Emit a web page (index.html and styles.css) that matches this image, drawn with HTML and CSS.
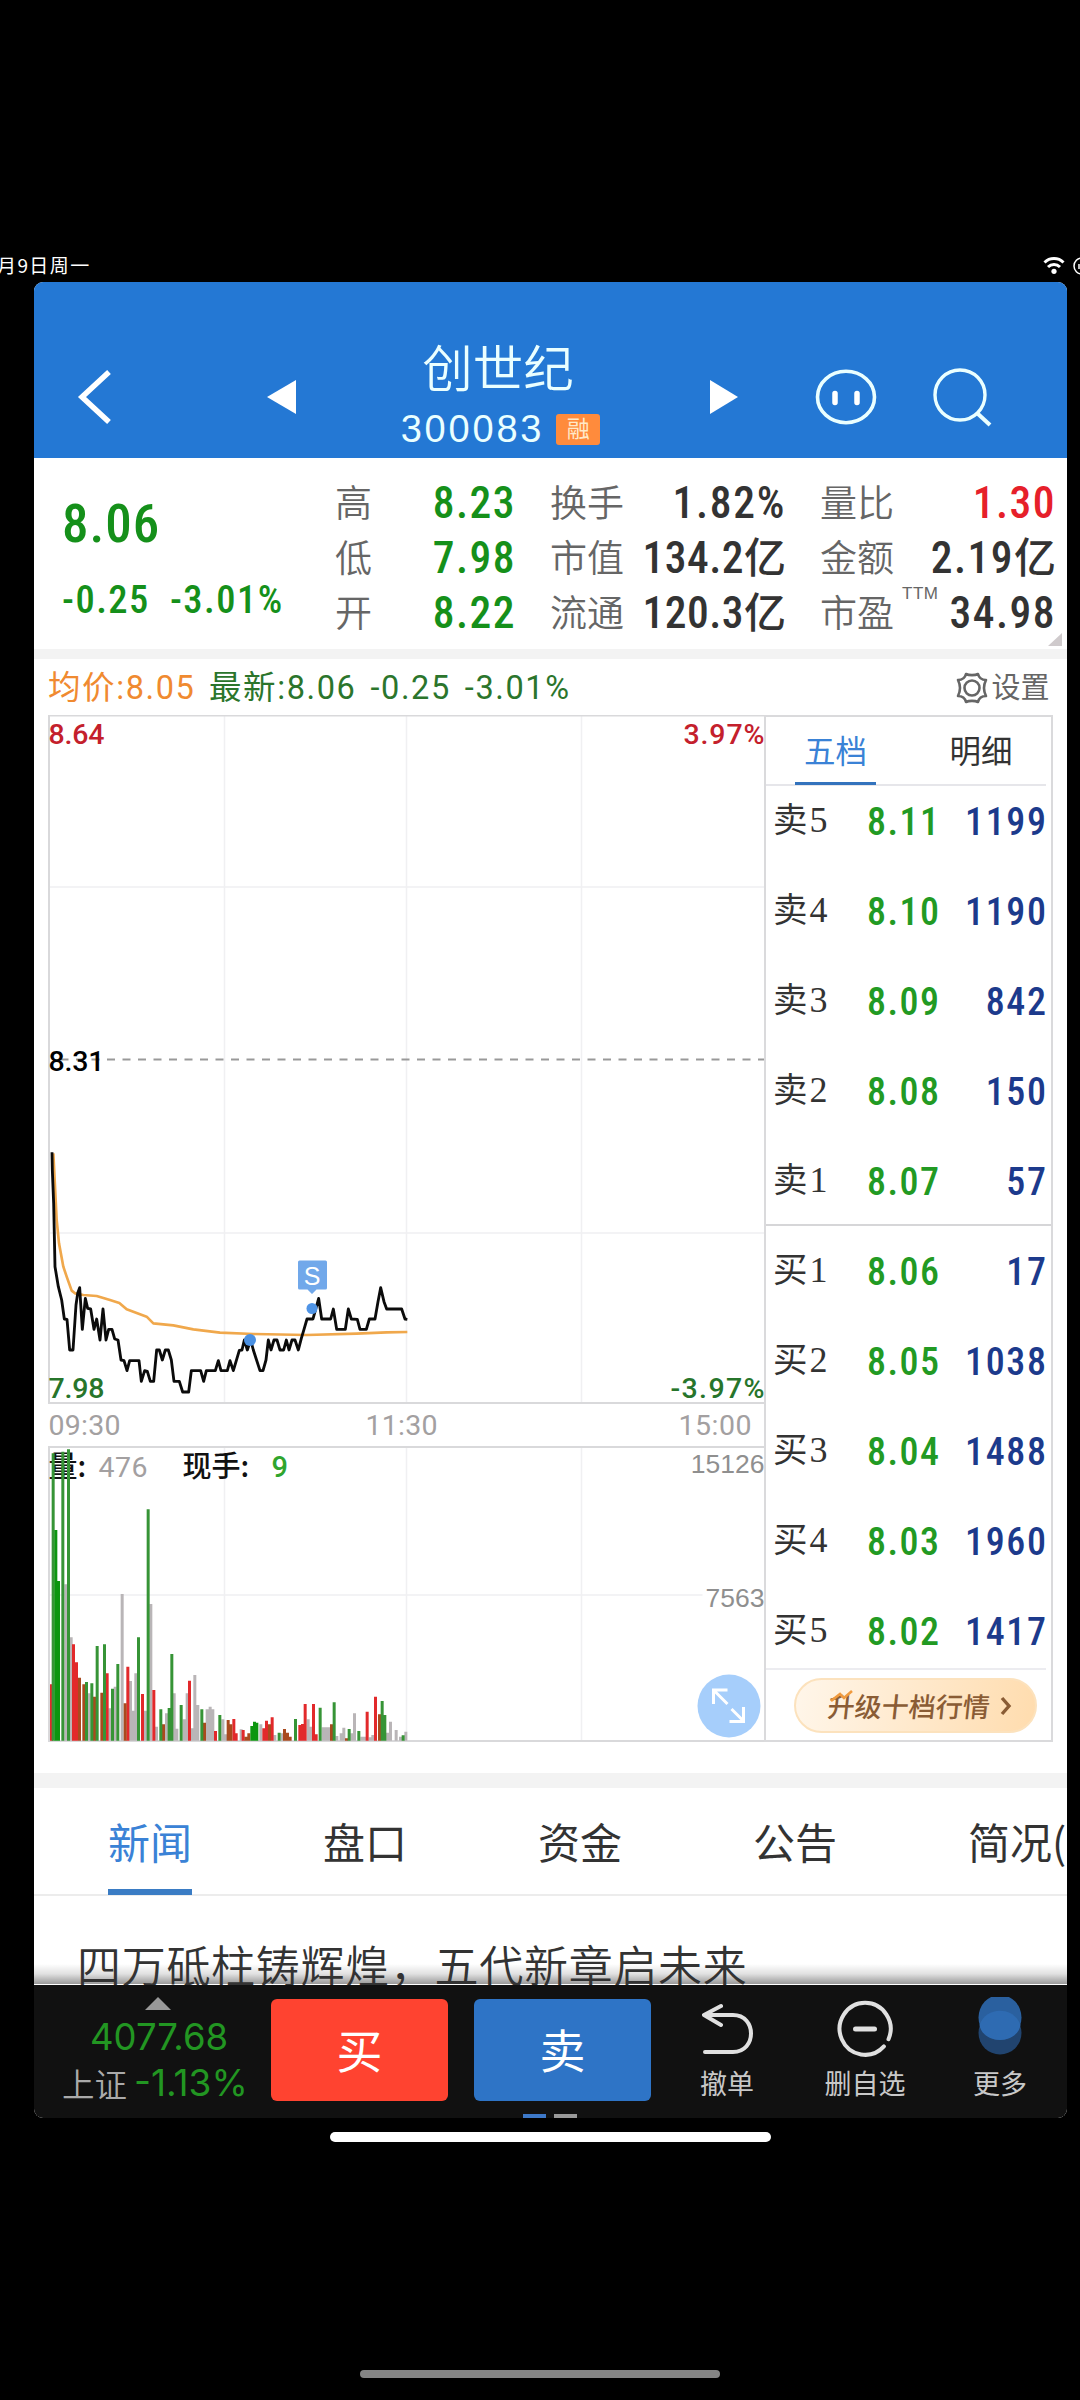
FILE: index.html
```html
<!DOCTYPE html>
<html lang="zh-CN">
<head>
    <meta charset="UTF-8">
    <meta name="viewport" content="width=device-width, initial-scale=1.0">
    <title>创世纪 300083</title>
    <link rel="stylesheet" href="styles.css">
</head>
<body>
    <div class="statusbar">
        <span class="date">月9日周一</span>
        <svg class="status-icons" width="37" height="20" viewBox="0 0 37 20">
            <path d="M1.5 6.5a13.5 13.5 0 0 1 19 0M5 11a8.6 8.6 0 0 1 12 0" fill="none" stroke="#fff" stroke-width="3"/>
            <circle cx="11" cy="15.3" r="2.6" fill="#fff"/>
            <circle cx="39" cy="10" r="8" fill="none" stroke="#fff" stroke-width="1.5"/>
            <path d="M36 8v5" stroke="#fff" stroke-width="1.5"/>
        </svg>
    </div>

    <div class="app">
        <header class="header">
            <svg class="back" width="36" height="58" viewBox="0 0 36 58"><path d="M33 4L6 29l27 25" fill="none" stroke="#fff" stroke-width="5.500"/></svg>
            <svg class="prev" width="30" height="34" viewBox="0 0 30 34"><path d="M0 17L29 0v34z" fill="#fff"/></svg>
            <div class="title">
                <h1>创世纪</h1>
                <div class="code">300083<span class="tag">融</span></div>
            </div>
            <svg class="next" width="30" height="34" viewBox="0 0 30 34"><path d="M29 17L1 0v34z" fill="#fff"/></svg>
            <svg class="face" width="62" height="56" viewBox="0 0 62 56">
                <ellipse cx="31" cy="28" rx="28.5" ry="25.7" fill="none" stroke="#eaffff" stroke-width="3.6"/>
                <path d="M20 24.500v9M42 24.500v9" stroke="#fff" stroke-width="5.5" stroke-linecap="round"/>
            </svg>
            <svg class="search" width="60" height="60" viewBox="0 0 60 60">
                <circle cx="28" cy="28" r="25" fill="none" stroke="#eaffff" stroke-width="3.4"/>
                <path d="M45 46l13 12" stroke="#eaffff" stroke-width="4"/>
            </svg>
        </header>

        <section class="quote">
            <div class="price num">
                <div class="last">8.06</div>
                <div class="change"><span>-0.25</span><span>-3.01%</span></div>
            </div>
            <div class="stats">
                <div class="stat"><label>高</label><b class="num down">8.23</b></div>
                <div class="stat"><label>换手</label><b class="num percent">1.82%</b></div>
                <div class="stat"><label>量比</label><b class="num up">1.30</b></div>
                <div class="stat"><label>低</label><b class="num down">7.98</b></div>
                <div class="stat"><label>市值</label><b class="num tight">134.2<small>亿</small></b></div>
                <div class="stat"><label>金额</label><b class="num">2.19<small>亿</small></b></div>
                <div class="stat"><label>开</label><b class="num down">8.22</b></div>
                <div class="stat"><label>流通</label><b class="num tight">120.3<small>亿</small></b></div>
                <div class="stat"><label>市盈<sup>TTM</sup></label><b class="num">34.98</b></div>
            </div>
            <i class="corner"></i>
        </section>

        <section class="market">
            <div class="summary">
                <span class="avg">均价:8.05</span>
                <span class="latest">最新:8.06</span>
                <span class="latest">-0.25</span>
                <span class="latest">-3.01%</span>
                <span class="settings">
                    <svg width="34" height="34" viewBox="0 0 34 34" fill="none" stroke="#666" stroke-width="2.6">
                        <path d="M11 3c3 1.500 9 1.500 12 0 1 4 3 6 8 6-2.500 5-2.500 11 0 16-5 0-7 2-8 6-3-1.500-9-1.500-12 0-1-4-3-6-8-6 2.500-5 2.500-11 0-16 5 0 7-2 8-6z" stroke-linejoin="round"/>
                        <circle cx="17" cy="17" r="7.5"/>
                    </svg>设置
                </span>
            </div>

            <div class="board">
                <svg class="chart" width="716" height="1027" viewBox="48.5 715 716 1027">
                    <!-- grid -->
                    <g stroke="#f0f0f2" stroke-width="1.5">
                        <path d="M225 715v688M407 715v688M582 715v688M49 887h716M49 1233h716"/>
                        <path d="M225 1447v294M407 1447v294M582 1447v294M49 1595h654"/>
                    </g>
                    <path d="M765 715.500H49.500v687.500h716M765 1447H49.500v294h716" fill="none" stroke="#d9d9db" stroke-width="2"/>
                    <path d="M61 1059.5h704" stroke="#999" stroke-width="2" stroke-dasharray="8 7.5"/>

                    <!-- average and price -->
                    <g transform="translate(40.5 1120) scale(.33333)" fill="none" stroke-linejoin="round">
                        <polyline stroke="#f0a84c" stroke-width="8" points="40,100 50,300 57,370 70,440 80,470 95,512 105,520 130,525 170,528 210,540 238,549 260,568 320,590 340,610 400,616 460,628 540,638 640,642 800,645 950,641 1040,637 1102,636"/>
                        <polyline stroke="#0b0b0b" stroke-width="8.5" points="36,97 37,150 41,250 45,440 55,500 65,540 73,597 81,598 89,690 99,690 108,555 113,520 119,503 127,628 136,535 143,565 152,567 162,628 170,597 180,660 189,567 198,660 206,628 216,628 224,657 234,660 243,720 252,722 261,752 269,722 297,722 304,784 314,752 322,754 331,784 341,784 350,690 358,690 367,720 376,690 385,690 394,720 402,784 418,784 428,816 446,816 454,752 482,752 491,784 499,752 526,752 535,722 543,752 562,752 570,722 580,752 598,691 606,690 613,660 622,690 632,660 640,690 660,752 669,752 678,720 685,660 693,690 702,660 711,660 720,690 731,690 739,660 747,690 756,660 765,660 775,690 784,655 792,628 801,597 819,597 836,535 845,597 872,597 880,567 890,628 916,628 925,567 934,597 952,598 960,628 979,628 988,597 1005,597 1014,545 1022,503 1032,545 1040,567 1085,567 1095,597 1102,598"/>
                    </g>
                    <circle cx="250.5" cy="1340" r="6" fill="#4a90e2"/>
                    <circle cx="312.5" cy="1308.5" r="5.5" fill="#4f94e6"/>
                    <path d="M300 1260.500h26a1.500 1.500 0 0 1 1.500 1.500v26a1.500 1.500 0 0 1-1.500 1.500h-9l-4.500 4.500-4.500-4.500h-8a1.500 1.500 0 0 1-1.500-1.500v-26a1.500 1.500 0 0 1 1.500-1.500z" fill="#71a8ea"/>
                    <text class="mark" x="312.500" y="1285" text-anchor="middle">S</text>

                    <text class="axis up" x="49" y="744" textLength="56">8.64</text>
                    <text class="axis up" x="684" y="744" textLength="81">3.97%</text>
                    <text class="axis" x="49" y="1071" textLength="56">8.31</text>
                    <text class="axis low" x="49" y="1398" textLength="56">7.98</text>
                    <text class="axis low" x="671" y="1398" textLength="94">-3.97%</text>
                    <text class="time" x="49" y="1435" textLength="72">09:30</text>
                    <text class="time" x="366" y="1435" textLength="72">11:30</text>
                    <text class="time" x="679" y="1435" textLength="73">15:00</text>

                    <text class="vol-name" x="49" y="1477">量:</text>
                    <text class="time" x="99" y="1477" textLength="49">476</text>
                    <text class="vol-name" x="183" y="1477">现手:</text>
                    <text class="vol-now" x="272" y="1477">9</text>
                    <text class="vol-axis" x="765" y="1473" text-anchor="end">15126</text>
                    <text class="vol-axis" x="765" y="1607" text-anchor="end">7563</text>

                    <!-- volume bars -->
                    <g transform="translate(40 1400) scale(.33333)" stroke-width="9">
                        <path stroke="#b9b5b7" d="M79 1022V553M95 1022V712M149 1022V880M211 1022V925M227 1022V860M248 1022V582M273 1022V843M281 1022V932M289 1022V820M318 1022V932M334 1022V612M351 1022V980M381 1022V940M404 1022V880M412 1022V986M434 1022V958M443 1022V880M459 1022V985M466 1022V825M475 1022V915M503 1022V928M512 1022V920M520 1022V928M550 1022V958M558 1022V1003M605 1022V988M664 1022V973M706 1022V1005M728 1022V1000M806 1022V958M814 1022V980M851 1022V982M859 1022V982M868 1022V982M892 1022V1008M905 1022V1000M913 1022V983M937 1022V1000M945 1022V940M967 1022V1010M975 1022V1010M992 1022V1012M1000 1022V1005M1044 1022V998M1053 1022V965M1070 1022V990M1083 1022V1010M1099 1022V995"/>
                        <path stroke="#e2292b" d="M36 1022V853M102 1022V733M111 1022V787M203 1022V820M265 1022V800M309 1022V882M343 1022V870M450 1022V842M528 1022V993M583 1022V957M590 1022V1000M611 1022V990M673 1022V985M681 1022V962M698 1022V952M781 1022V975M789 1022V972M797 1022V912M822 1022V912M830 1022V1003M983 1022V935M1008 1022V890"/>
                        <path stroke="#a94a1e" d="M120 1022V833M133 1022V853M165 1022V890M187 1022V878M257 1022V910M372 1022V973M495 1022V968M566 1022V960M574 1022V973M619 1022V1010M628 1022V1000M690 1022V973M735 1022V987M744 1022V998M752 1022V1010M876 1022V973M921 1022V1015M1020 1022V943"/>
                        <path stroke="#369436" d="M41 1022V160M70 1022V155M87 1022V148M141 1022V846M157 1022V850M173 1022V738M195 1022V733M219 1022V866M235 1022V792M297 1022V712M326 1022V328M364 1022V928M389 1022V924M397 1022V762M425 1022V915M487 1022V928M541 1022V945M719 1022V998M768 1022V957M842 1022V923M884 1022V907M929 1022V987M958 1022V993M1028 1022V903M1036 1022V945M1091 1022V1006"/>
                        <path stroke="#0c960f" d="M49 1022V390M57 1022V543M637 1022V978M645 1022V965M652 1022V968"/>
                    </g>

                    <circle cx="729.500" cy="1706" r="31.500" fill="#a6cefb"/>
                    <path d="M728 1704l-13-13M714 1704v-14h14M732 1709l12 12M730 1721.500h14V1707" fill="none" stroke="#fff" stroke-width="3"/>
                </svg>

                <aside class="depth">
                    <div class="depth-tabs"><span class="active">五档</span><span>明细</span></div>
                    <div class="level"><span>卖<i>5</i></span><b class="num">8.11</b><em class="num">1199</em></div>
                    <div class="level"><span>卖<i>4</i></span><b class="num">8.10</b><em class="num">1190</em></div>
                    <div class="level"><span>卖<i>3</i></span><b class="num">8.09</b><em class="num">842</em></div>
                    <div class="level"><span>卖<i>2</i></span><b class="num">8.08</b><em class="num">150</em></div>
                    <div class="level last-ask"><span>卖<i>1</i></span><b class="num">8.07</b><em class="num">57</em></div>
                    <div class="level"><span>买<i>1</i></span><b class="num">8.06</b><em class="num">17</em></div>
                    <div class="level"><span>买<i>2</i></span><b class="num">8.05</b><em class="num">1038</em></div>
                    <div class="level"><span>买<i>3</i></span><b class="num">8.04</b><em class="num">1488</em></div>
                    <div class="level"><span>买<i>4</i></span><b class="num">8.03</b><em class="num">1960</em></div>
                    <div class="level"><span>买<i>5</i></span><b class="num">8.02</b><em class="num">1417</em></div>
                    <div class="upgrade">
                        <a class="pill">
                            <svg class="spark" width="26" height="14" viewBox="0 0 26 14"><path d="M2 12l9-7 4 4 8-7" fill="none" stroke="#f09a3e" stroke-width="2.600"/></svg>
                            <span>升级十档行情</span>
                            <svg width="12" height="20" viewBox="0 0 12 20"><path d="M2 2l7 8-7 8" fill="none" stroke="#8a5c35" stroke-width="3.400"/></svg>
                        </a>
                    </div>
                </aside>
            </div>
        </section>

        <nav class="tabs">
            <span class="active">新闻</span><span>盘口</span><span>资金</span><span>公告</span><span>简况(</span>
        </nav>
        <div class="news">四万砥柱铸辉煌，五代新章启未来</div>

        <footer class="toolbar">
            <div class="index">
                <i class="arrow"></i>
                <div class="points">4077.68</div>
                <div class="pct"><span>上证</span>-1.13%</div>
            </div>
            <a class="btn buy">买</a>
            <a class="btn sell">卖</a>
            <div class="tool undo">
                <svg width="56" height="60" viewBox="0 0 56 60" fill="none" stroke="#e0e0e0" stroke-width="4" stroke-linecap="round" stroke-linejoin="round"><path d="M22 8L5 17l17 10M5 17h29c24 0 24 37 0 37H6"/></svg>
                <span>撤单</span>
            </div>
            <div class="tool remove">
                <svg width="56" height="60" viewBox="0 0 56 60" fill="none" stroke="#e0e0e0" stroke-width="4" stroke-linecap="round"><path d="M51.500 41.200A25.500 26 0 1 0 46.900 48.400"/><path d="M18.500 31h19" stroke-width="5"/></svg>
                <span>删自选</span>
            </div>
            <div class="tool more">
                <svg width="56" height="60" viewBox="0 0 56 60">
                    <ellipse cx="28" cy="36" rx="21.500" ry="21.500" fill="#21446f"/>
                    <ellipse cx="28" cy="20.500" rx="21.500" ry="22.500" fill="#2a609f"/>
                    <path d="M7.500 28C14 9 42 9 48.500 28 45 48 11 48 7.500 28z" fill="#2e6bb2"/>
                </svg>
                <span>更多</span>
            </div>
            <div class="pager"><i></i><i></i></div>
        </footer>
    </div>

    <div class="home-bar"></div>
    <div class="nav-bar"></div>
</body>
</html>
```
FILE: styles.css
```css
* {
    box-sizing: border-box;
}
body {
    margin: 0;
    width: 1080px;
    height: 2400px;
    overflow: hidden;
    background-color: #000;
    color: #333;
    font-family: "Liberation Sans", "Noto Sans CJK SC", sans-serif;
    display: flex;
    flex-direction: column;
}
svg {
    display: block;
    flex: none;
}
i, em {
    font-style: normal;
}
.num {
    font-family: Roboto, "Noto Sans CJK SC", sans-serif;
    font-stretch: 85%;
    font-weight: 480;
    letter-spacing: 1.5px;
}
.up {
    color: #e6202a;
    fill: #c4202c;
}
.down {
    color: #15901a;
}

/* status bar */
.statusbar {
    height: 282px;
    padding-top: 250px;
    display: flex;
    justify-content: space-between;
    color: #fff;
}
.date {
    margin-left: -3px;
    font: 19px/30px "Noto Sans CJK SC", sans-serif;
    letter-spacing: 1.4px;
}
.status-icons {
    margin-top: 6px;
}

.app {
    width: 1032.500px;
    height: 1836px;
    margin-left: 34px;
    flex: none;
    display: flex;
    flex-direction: column;
    overflow: hidden;
    background-color: #fff;
    border-radius: 9px;
}

/* header */
.header {
    height: 176px;
    flex: none;
    display: flex;
    align-items: center;
    padding: 54px 75px 0 42px;
    background-color: #2478d4;
    color: #eaffff;
}
.prev {
    margin-left: 155px;
}
.title {
    width: 240px;
    height: 122px;
    margin-left: 81px;
    text-align: center;
}
.title h1 {
    margin: -1px 0 0;
    font: 350 50.5px/60px "Noto Sans CJK SC", sans-serif;
}
.code {
    display: flex;
    justify-content: center;
    align-items: center;
    margin: 3px 0 0 5px;
    font-size: 38px;
    line-height: 62px;
    height: 62px;
    letter-spacing: 2.800px;
}
.tag {
    width: 44px;
    height: 31px;
    margin: 1px 0 0 12px;
    border-radius: 3px;
    background-color: #ff8b3c;
    color: #ffe9c8;
    font-size: 23px;
    line-height: 30px;
    text-align: center;
    letter-spacing: 0;
}
.next {
    margin-left: 91px;
}
.face {
    margin-left: 76px;
}
.search {
    margin-left: auto;
}

/* quote */
.quote {
    position: relative;
    height: 201px;
    flex: none;
    display: flex;
    border-bottom: 10px solid #f3f3f3;
}
.price {
    width: 272px;
    margin-right: 29px;
    padding: 35px 0 0 28px;
    color: #15901a;
    flex: none;
}
.last {
    font-size: 53px;
    line-height: 62px;
    letter-spacing: 1px;
}
.change {
    display: flex;
    gap: 20px;
    margin-top: 20px;
    font-size: 38.5px;
    line-height: 50px;
    font-stretch: 87%;
    white-space: nowrap;
}
.stats {
    display: grid;
    grid-template-columns: 181px 236px 236px;
    grid-auto-rows: 55px;
    column-gap: 34px;
    padding-top: 16px;
}
.stat {
    display: flex;
    justify-content: space-between;
    align-items: center;
    white-space: nowrap;
}
.stat label {
    position: relative;
    color: #666;
    font: 350 37px/53px "Noto Sans CJK SC", sans-serif;
}
.stat sup {
    position: absolute;
    left: 82px;
    top: -1px;
    font: 17px/20px "Liberation Sans", sans-serif;
    letter-spacing: 0.5px;
}
.stat b {
    padding-top: 3px;
    font-size: 43.5px;
    line-height: 55px;
}
.stat .percent {
    font-stretch: 87%;
    letter-spacing: 1.7px;
}
.stat .tight {
    letter-spacing: 0.5px;
}
.stat small {
    font-size: 42px;
    letter-spacing: 0;
}
.corner {
    position: absolute;
    right: 5px;
    bottom: 3px;
    border-left: 14px solid transparent;
    border-bottom: 13px solid #cfcacc;
}

/* chart and depth */
.market {
    height: 1129px;
    flex: none;
    padding: 0 14px;
    border-bottom: 15px solid #f3f3f3;
}
.summary {
    height: 56px;
    display: flex;
    align-items: center;
    padding-top: 1px;
    font: 32.5px/56px Roboto, "Noto Sans CJK SC", sans-serif;
    letter-spacing: 1.6px;
    white-space: nowrap;
}
.avg {
    width: 161px;
    color: #f08a30;
}
.latest {
    margin-right: 14px;
    color: #2b752c;
}
.settings {
    display: flex;
    align-items: center;
    gap: 2px;
    margin: 0 3px 0 auto;
    color: #666;
    font-size: 29px;
    letter-spacing: 0;
}
.board {
    display: flex;
}
.axis {
    font: 500 28.5px Roboto, sans-serif;
    font-stretch: 90%;
}
.low {
    fill: #27752b;
}
.time {
    font: 450 28.5px Roboto, sans-serif;
    font-stretch: 90%;
    fill: #a3a0a1;
}
.vol-name {
    font: 500 29px "Noto Sans CJK SC", sans-serif;
    fill: #111;
}
.vol-now {
    font: 500 29px Roboto, sans-serif;
    font-stretch: 90%;
    fill: #30a52e;
}
.vol-axis {
    font: 26.500px "Liberation Sans", sans-serif;
    fill: #8f8f8f;
}
.mark {
    font: 25px "Liberation Sans", sans-serif;
    fill: #fff;
}
.depth {
    width: 289px;
    height: 1027px;
    border: 2px solid #dadadc;
}
.depth-tabs {
    display: flex;
    justify-content: space-between;
    height: 69px;
    margin-right: 5px;
    padding: 0 24px 0 29px;
    border-bottom: 2px solid #e6e6ea;
    font: 31.5px/64px "Noto Sans CJK SC", sans-serif;
}
.depth-tabs span {
    height: 68px;
    padding: 0 9px;
}
.depth-tabs .active {
    color: #3a82d6;
    border-bottom: 3px solid #3373bd;
}
.level {
    position: relative;
    height: 90px;
    display: flex;
    padding: 0 3px 0 7px;
    line-height: 72px;
}
.last-ask::after {
    content: "";
    position: absolute;
    left: 0;
    right: 0;
    bottom: 10px;
    border-bottom: 2px solid #d6d6d8;
}
.level span {
    width: 94px;
    font: 34.5px/62px "Noto Sans CJK SC", sans-serif;
}
.level i {
    margin-left: 2px;
    font: 36px/62px "Liberation Serif", serif;
}
.level b {
    color: #229a23;
    font-size: 38px;
}
.level em {
    margin-left: auto;
    color: #1c3a8c;
    font-size: 38px;
    letter-spacing: 1.6px;
}
.upgrade {
    position: relative;
    height: 73px;
    margin: -18px 5px 0 0;
    padding: 8px 9px 0 28px;
    border-top: 2px solid #ececf0;
}
.pill {
    position: relative;
    height: 55px;
    display: flex;
    align-items: center;
    gap: 10px;
    padding-left: 32px;
    border: 2px solid #fce2bd;
    border-radius: 28px;
    background: linear-gradient(100deg, #fff6ea, #ffdcae);
    color: #8a5c35;
    font: 500 27px/50px "Noto Sans CJK SC", sans-serif;
}
.pill span {
    transform: skewX(-6deg);
}
.spark {
    position: absolute;
    left: 33px;
    top: 9px;
    z-index: 1;
}

/* tabs and news */
.tabs {
    height: 108px;
    flex: none;
    display: flex;
    gap: 131px;
    padding-left: 74px;
    border-bottom: 2px solid #ececec;
    font: 42px/105px "Noto Sans CJK SC", sans-serif;
    white-space: nowrap;
}
.tabs span {
    height: 107px;
    flex: none;
    width: 84px;
}
.tabs .active {
    color: #3a82d6;
    border-bottom: 6px solid #3a7cc4;
}
.news {
    height: 89px;
    flex: none;
    overflow: hidden;
    padding: 36px 0 0 43px;
    background: linear-gradient(transparent 68px, rgba(0, 0, 0, 0.12) 78px, rgba(0, 0, 0, 0.4) 88px, #fff 88px);
    font: 350 44px/64px "Noto Sans CJK SC", sans-serif;
    letter-spacing: 0.7px;
    white-space: nowrap;
}

/* toolbar */
.toolbar {
    position: relative;
    flex: 1;
    display: flex;
    align-items: flex-start;
    padding-top: 14px;
    background-color: #111;
    color: #c8c8c8;
}
.index {
    width: 237px;
    padding-left: 28px;
}
.arrow {
    display: block;
    width: 26px;
    margin: -2px 0 0 83px;
    border: 13px solid transparent;
    border-top: 0;
    border-bottom-color: #999;
}
.points {
    margin-left: 28px;
    padding-top: 1px;
    color: #229622;
    font: 36.5px/52px Inter, sans-serif;
}
.pct {
    display: flex;
    gap: 7px;
    color: #229622;
    font: 37px/40px Inter, sans-serif;
    white-space: nowrap;
}
.pct span {
    color: #aaa;
    font: 350 32.5px/40px "Noto Sans CJK SC", sans-serif;
}
.btn {
    width: 177px;
    height: 102px;
    border-radius: 6px;
    color: #fff;
    font: 46px/98px "Noto Sans CJK SC", sans-serif;
    text-align: center;
}
.buy {
    background-color: #ff4330;
}
.sell {
    margin-left: 26px;
    background-color: #2e74c6;
}
.tool {
    width: 100px;
    display: flex;
    flex-direction: column;
    align-items: center;
    font: 27px/40px "Noto Sans CJK SC", sans-serif;
}
.tool svg {
    margin-top: -1px;
}
.tool span {
    margin-top: 5px;
}
.undo {
    margin-left: 26px;
}
.remove {
    margin-left: 38px;
}
.more {
    margin-left: 35px;
}
.more svg {
    margin: -2px 0 1px;
}
.pager {
    position: absolute;
    left: 489px;
    bottom: 0;
    display: flex;
    gap: 8px;
}
.pager i {
    width: 23px;
    height: 4px;
    background-color: #3d78c8;
}
.pager i + i {
    background-color: #999;
}

.home-bar {
    width: 441px;
    height: 10px;
    flex: none;
    margin: 14px 0 0 330px;
    border-radius: 5px;
    background-color: #fff;
}
.nav-bar {
    width: 360px;
    height: 8px;
    flex: none;
    margin: 228px 0 0 360px;
    border-radius: 4px;
    background-color: #858585;
}
```
